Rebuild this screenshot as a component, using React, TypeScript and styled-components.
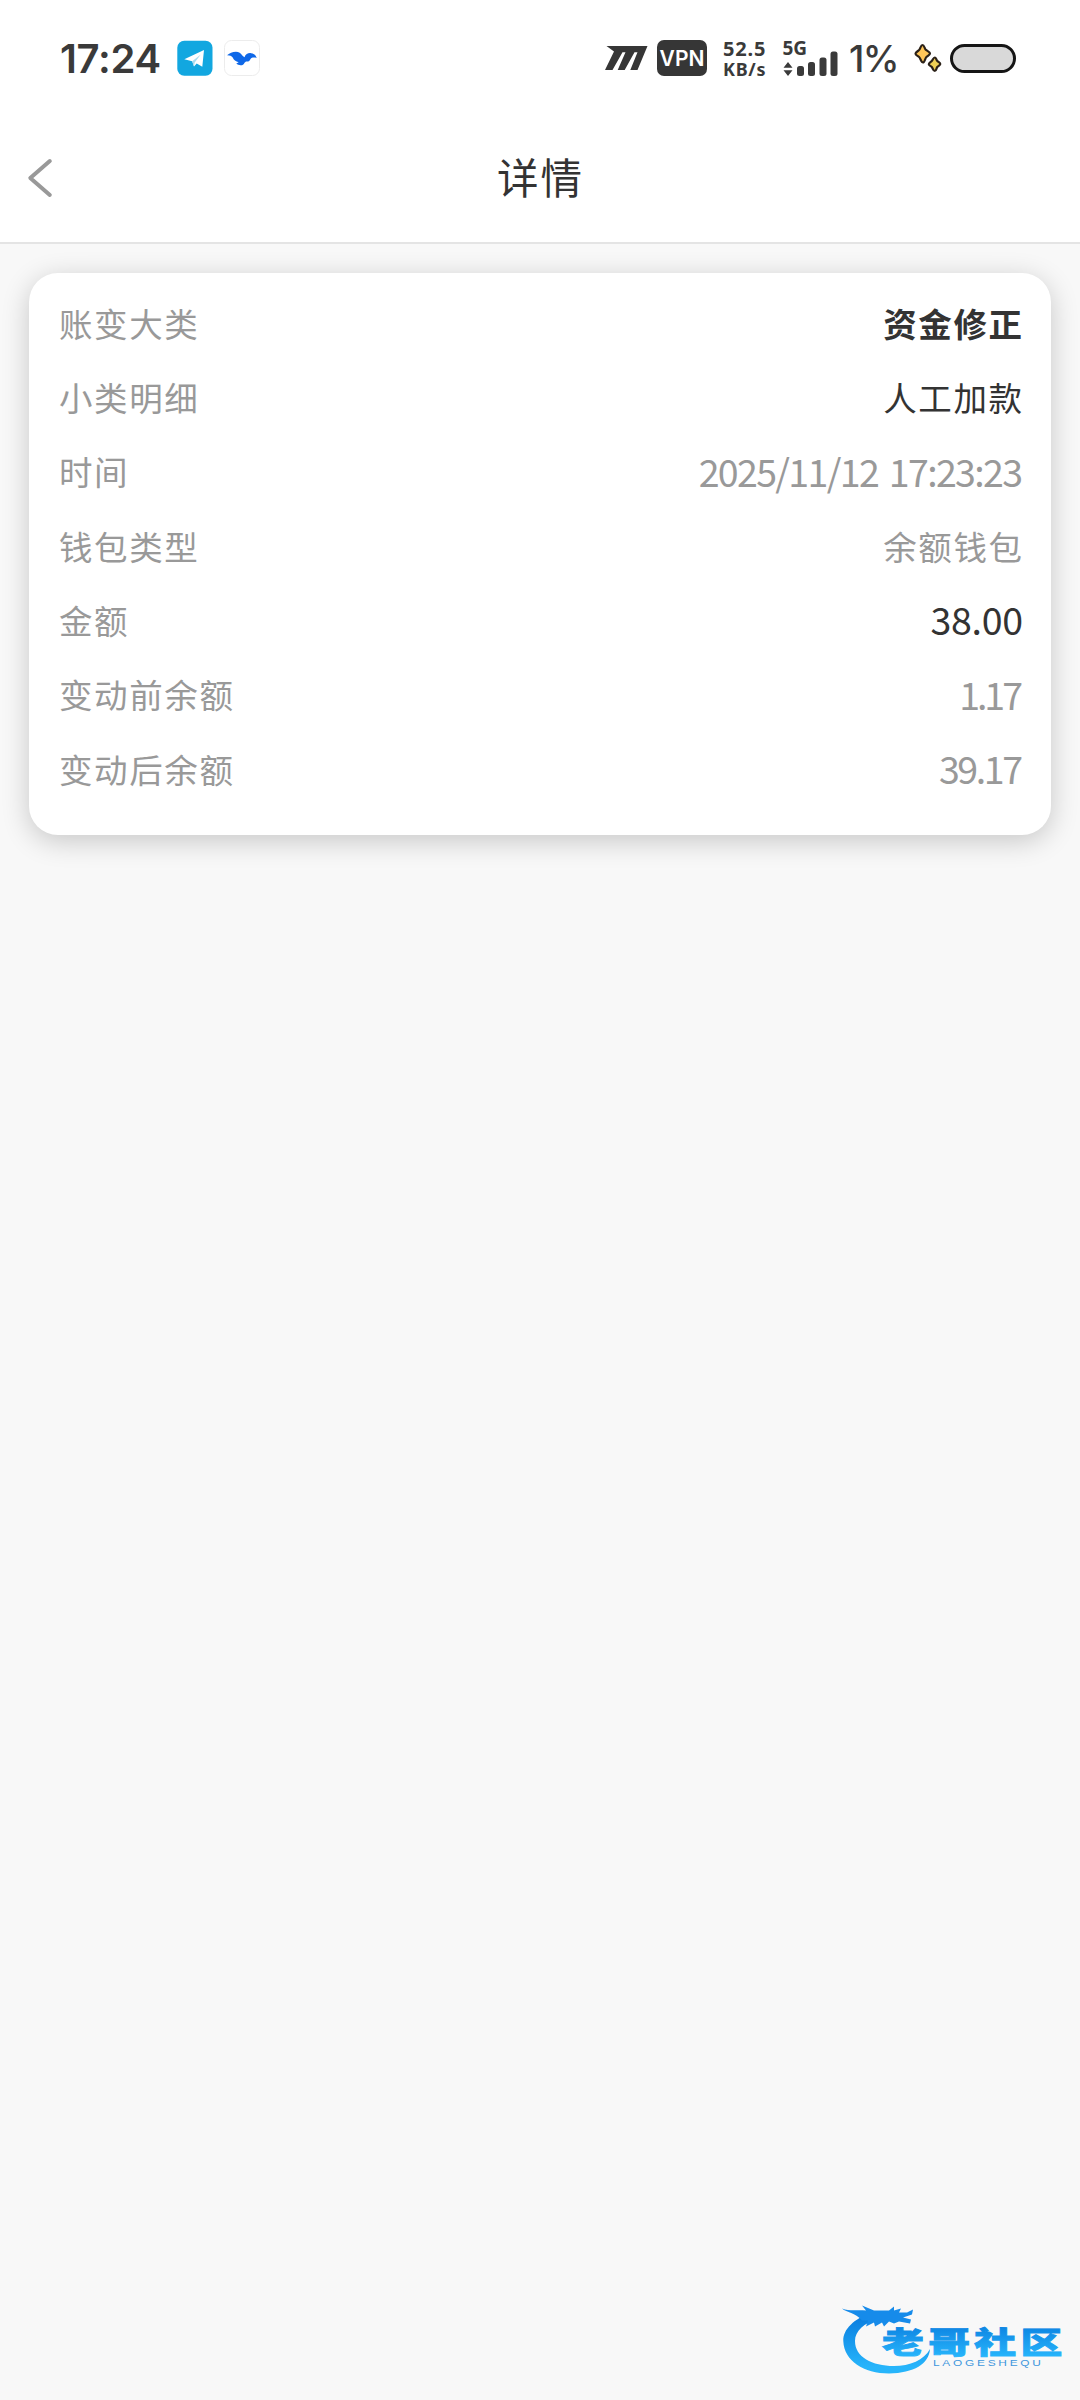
import React from "react";
import styled, { createGlobalStyle } from "styled-components";

const GlobalStyle = createGlobalStyle`
  * {
    box-sizing: border-box;
  }

  body {
    margin: 0;
    background: #f8f8f8;
    font-family: "Inter", "Noto Sans CJK SC", sans-serif;
    color: #333;
  }
`;

const Page = styled.div`
  display: flex;
  flex-direction: column;
  width: 1080px;
  height: 2400px;
  background: #f8f8f8;
  overflow: hidden;
`;

const StatusBar = styled.div`
  display: flex;
  align-items: center;
  justify-content: space-between;
  height: 116px;
  padding: 0 64px 0 60px;
  background: #fff;
`;

const StatusGroup = styled.div`
  display: flex;
  align-items: center;
  height: 40px;
`;

const Clock = styled.span`
  width: 117px;
  padding-top: 2px;
  font-size: 40px;
  font-weight: 600;
  line-height: 40px;
  letter-spacing: -0.3px;
  color: #3a3a3a;
`;

const AppIcon = styled.svg`
  display: block;
  width: 36px;
  height: 36px;
  margin-right: 11px;
`;

const Brand = styled.svg`
  display: block;
  width: 43px;
  height: 24px;
  margin-right: 9px;
`;

const Vpn = styled.span`
  width: 50px;
  height: 36px;
  margin-right: 16px;
  border-radius: 7px;
  background: #363636;
  color: #fff;
  font-size: 21px;
  font-weight: 600;
  line-height: 37px;
  text-align: center;
`;

const Speed = styled.div`
  display: flex;
  flex-direction: column;
  width: 60px;
  padding-top: 1px;
  font-family: "Noto Sans", sans-serif;
  font-weight: 700;
  color: #3a3a3a;
`;

const SpeedLine = styled.span<{ size: number; spacing: number }>`
  height: 20px;
  font-size: ${(p) => p.size}px;
  line-height: 20px;
  letter-spacing: ${(p) => p.spacing}px;
  white-space: nowrap;
`;

const Signal = styled.svg`
  display: block;
  width: 55px;
  height: 36px;
  margin-right: 11px;
  overflow: visible;
  font-family: "Noto Sans", sans-serif;
`;

const Percent = styled.span`
  width: 65px;
  padding-top: 1px;
  font-size: 37px;
  font-weight: 500;
  line-height: 40px;
  letter-spacing: -1.5px;
  color: #3a3a3a;
`;

const Sparkles = styled.svg`
  display: block;
  width: 28px;
  height: 30px;
  margin-right: 8px;
`;

const Battery = styled.div`
  width: 66px;
  height: 29px;
  border: 3px solid #151515;
  border-radius: 15px;
  background: #d9d9d9;
`;

const Header = styled.header`
  display: grid;
  grid-template-columns: 80px 1fr 80px;
  align-items: center;
  height: 127.5px;
  padding-bottom: 1px;
  border-bottom: 2px solid #e4e4e4;
  background: #fff;
`;

const Back = styled.svg`
  display: block;
  width: 28px;
  height: 42px;
  margin-left: 25px;
`;

const Title = styled.h1`
  margin: 0;
  padding: 1px 0 0 1px;
  font-size: 41.5px;
  font-weight: 400;
  line-height: 60px;
  letter-spacing: 2px;
  text-align: center;
  color: #333;
`;

const Card = styled.section`
  margin: 29.5px 29px 0;
  height: 562px;
  padding: 14.5px 29px 0 30px;
  border-radius: 29px;
  background: #fff;
  box-shadow: 0 6px 28px rgba(0, 0, 0, 0.2);
`;

const Row = styled.div`
  display: flex;
  align-items: center;
  justify-content: space-between;
  height: 74.33px;
  font-size: 33.5px;
  line-height: 48px;
`;

const Label = styled.span`
  letter-spacing: 1.6px;
  color: #999;
`;

const Value = styled.span<{ dark?: boolean; strong?: boolean }>`
  margin-right: -1.6px;
  letter-spacing: 1.6px;
  font-weight: ${(p) => (p.strong ? 700 : 400)};
  color: ${(p) => (p.dark ? "#333" : "#999")};
`;

const Digits = styled(Value)<{ spacing: number }>`
  margin-right: ${(p) => -p.spacing - 1}px;
  padding-bottom: 5px;
  font-family: "Noto Sans CJK SC", sans-serif;
  font-size: 37.5px;
  letter-spacing: ${(p) => p.spacing}px;
  word-spacing: 4px;
`;

const Watermark = styled.svg`
  display: block;
  width: 240px;
  height: 90px;
  margin: auto 8px 15px auto;
`;

const rows = [
  { label: "账变大类", value: "资金修正", dark: true, strong: true },
  { label: "小类明细", value: "人工加款", dark: true },
  { label: "时间", value: "2025/11/12 17:23:23", spacing: -1.65 },
  { label: "钱包类型", value: "余额钱包" },
  { label: "金额", value: "38.00", dark: true, spacing: -0.3 },
  { label: "变动前余额", value: "1.17", spacing: -3 },
  { label: "变动后余额", value: "39.17", spacing: -2.4 },
];

const Logo = () => (
  <Watermark viewBox="0 0 240 90">
    <defs>
      <linearGradient id="blue" x1="0" y1="0" x2="0" y2="1">
        <stop offset="0.1" stopColor="#0b7fe0" />
        <stop offset="0.9" stopColor="#27b5fb" />
      </linearGradient>
    </defs>
    <path
      d="M40 17C22 24 11 34 11.300 46c.7 20 20.700 32.500 45.700 32.500 25-.5 40-9.500 41-24.500-6 11-20 17-36 17-22 0-39-9-39-25 0-10 9-18 23-22Z"
      fill="url(#blue)"
    />
    <path
      d="M10 13.500c8 3 15 1 24 2l-4-5 12 5 15 0 5-4 0 4 7-2-2 4 8 0 6-3-1 5-9 3 8 2-1 4-11-2-5 2-5-2-5 5-2-4-7 4-1-4-8 4 2-6-6 0C23 17 15 18 10 13.500Z"
      fill="#168bea"
    />
    <text
      transform="translate(50 58) scale(1.35 0.97)"
      x="0"
      y="0"
      fontFamily="Noto Sans CJK SC, sans-serif"
      fontWeight="900"
      fontSize="31"
      letterSpacing="3.2"
      fill="url(#blue)"
      stroke="url(#blue)"
      strokeWidth="0.9"
    >
      老哥社区
    </text>
    <text
      transform="translate(101 70.5) scale(1.25 1)"
      x="0"
      y="0"
      fontFamily="Liberation Sans, sans-serif"
      fontSize="9.500"
      letterSpacing="2.200"
      fill="#3f97dd"
    >
      LAOGESHEQU
    </text>
  </Watermark>
);

export default function App() {
  return (
    <>
      <GlobalStyle />
      <Page>
        <StatusBar>
          <StatusGroup>
            <Clock>17:24</Clock>
            <AppIcon viewBox="0 0 36 36">
              <rect x="0.3" y="0.8" width="35.2" height="35" rx="7" fill="#12a7e0" />
              <path d="M7.300 19.300 27 10l-1.700 16.700-5.600-3.200-2.700 3-1.800-5.300Z" fill="#fff" />
              <path d="m15.200 21.200 8.600-6.600-6.100 7.800-.7 4.100Z" fill="#a9dcf0" />
            </AppIcon>
            <AppIcon viewBox="0 0 36 36">
              <rect x="0.5" y="0.5" width="35" height="35" rx="7" fill="#fff" stroke="#ececec" />
              <path
                d="M3 15.300C6 12.500 12 10.500 15.700 12.700c2.300 1.300 2.600 3.600 4.800 4.500 1-3 4-4.500 6.500-4 3 .3 5 2 5.700 4.800-2.700-.8-5-.5-6.200 1-.6 1.800-2.300 3-4.500 2.500l-1.500 1.200c-.8 2-2.500 2.800-4 2.600-1.500-.1-3-.9-4.200-1.800l2.400-1.200c-3-.6-5-2.300-6-4.700-1.200-1.500-3-2.400-5.700-2.300Z"
                fill="#0f68e8"
              />
            </AppIcon>
          </StatusGroup>
          <StatusGroup>
            <Brand viewBox="0 0 43 24">
              <path
                d="M1.500 0H42.500L32.500 24H25.300L32.500 6.300H29.500L19.700 24H12.700L20.500 6.300H17.500L7.500 24H0L9 5.500Z"
                fill="#363636"
              />
            </Brand>
            <Vpn>VPN</Vpn>
            <Speed>
              <SpeedLine size={20} spacing={0.8}>52.5</SpeedLine>
              <SpeedLine size={18} spacing={0.7}>KB/s</SpeedLine>
            </Speed>
            <Signal viewBox="0 0 55 36">
              <text x="-0.5" y="15" fontSize="19" fontWeight="700" fill="#3a3a3a">5G</text>
              <path d="m5 22 4.500 5.800h-9ZM5 36l4.500-5.800h-9Z" fill="#3a3a3a" />
              <rect x="14" y="26" width="7" height="10" rx="2.500" fill="#3a3a3a" />
              <rect x="25" y="22" width="7" height="14" rx="2.500" fill="#3a3a3a" />
              <rect x="36.500" y="17.500" width="7" height="18.500" rx="2.500" fill="#3a3a3a" />
              <rect x="47.500" y="11.500" width="7" height="24.500" rx="2.500" fill="#3a3a3a" />
            </Signal>
            <Percent>1%</Percent>
            <Sparkles viewBox="0 0 28 30">
              <g stroke="#2b2118" strokeWidth="2.200" strokeLinejoin="round">
                <path d="M8.500 2c1.500 0 2 3 3 4.500 1 1 4.500 2.500 4.500 4s-3 2.500-4 4-1.500 5-3 5-2.500-3.500-3.500-5-4-2.300-4-3.800S4.500 8 5.500 6.500 7 2 8.500 2Z" fill="#ffc659" />
                <path d="M20.800 14.500c1.200 0 1.500 2.500 2.500 3.500s3 1.800 3 3-2 1.800-3 3-1 4-2.500 4-2-2.800-3-4-3-1.500-3-2.800 2-2.200 3-3.200 1.500-3.500 3-3.500Z" fill="#efcf55" />
              </g>
            </Sparkles>
            <Battery />
          </StatusGroup>
        </StatusBar>
        <Header>
          <Back viewBox="0 0 28 42">
            <path
              d="M24.800 4 5.300 21l19.500 17"
              fill="none"
              stroke="#999"
              strokeWidth="4"
              strokeLinecap="round"
              strokeLinejoin="round"
            />
          </Back>
          <Title>详情</Title>
        </Header>
        <Card>
          {rows.map(({ label, value, spacing, dark, strong }) => (
            <Row key={label}>
              <Label>{label}</Label>
              {spacing !== undefined ? (
                <Digits dark={dark} spacing={spacing}>
                  {value}
                </Digits>
              ) : (
                <Value dark={dark} strong={strong}>
                  {value}
                </Value>
              )}
            </Row>
          ))}
        </Card>
        <Logo />
      </Page>
    </>
  );
}
